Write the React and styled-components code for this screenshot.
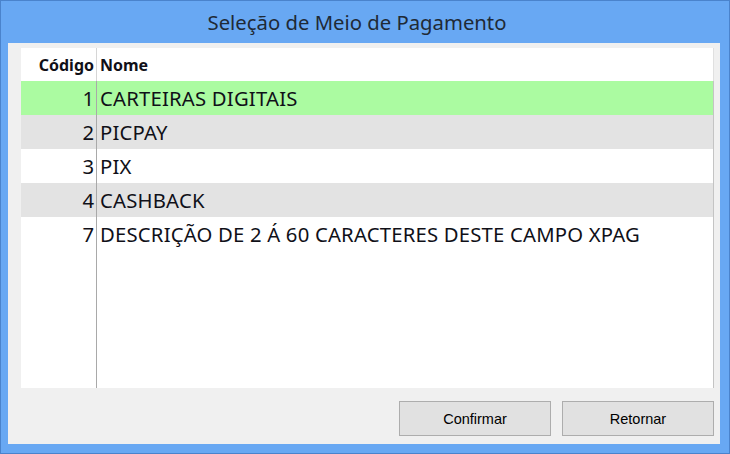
import styled, { createGlobalStyle } from "styled-components";

const GlobalStyle = createGlobalStyle`
    html, body {
        margin: 0;
        padding: 0;
        background: #ffffff;
    }
    * {
        box-sizing: border-box;
    }
`

const Window = styled.div`
    width: 730px;
    height: 454px;
    display: flex;
    flex-direction: column;
    background-color: #68a8f3;
    border: 1px solid #4a83cc;
    padding: 0 9px 9px 7px;
    font-family: "Noto Sans", "Open Sans", sans-serif;
`

const TitleBar = styled.div`
    height: 42px;
    display: flex;
    align-items: center;
    justify-content: center;
    padding-right: 14px;
    font-size: 20.3px;
    color: #1f2a36;
`

const Client = styled.div`
    flex: 1;
    display: flex;
    flex-direction: column;
    background-color: #f0f0f0;
    padding: 5px 6px 7px 13px;
`

const Grid = styled.div`
    height: 340px;
    display: flex;
    flex-direction: column;
    background-color: #ffffff;
`

const Row = styled.div`
    display: flex;
    height: ${props => props.$height || 34}px;
    flex: ${props => props.$fill ? 1 : "none"};
    background-color: ${props => props.$bg || "#ffffff"};
    color: #101018;
`

const CodeCell = styled.div`
    width: 76px;
    display: flex;
    align-items: center;
    justify-content: flex-end;
    padding-right: 2px;
    border-right: 1px solid ${props => props.$light ? "#d6d6d6" : "#a9a9a9"};
    font-size: ${props => props.$head ? "16px" : "20.3px"};
    font-weight: ${props => props.$head ? 700 : 400};
`

const NameCell = styled.div`
    flex: 1;
    display: flex;
    align-items: center;
    padding-left: 3px;
    border-right: 1px solid ${props => props.$light ? "#e0e0e0" : "#c4c4c4"};
    font-size: ${props => props.$head ? "16px" : "20.3px"};
    font-weight: ${props => props.$head ? 700 : 400};
    letter-spacing: ${props => props.$head ? 0 : 0.2}px;
    white-space: nowrap;
`

const ButtonBar = styled.div`
    display: flex;
    justify-content: flex-end;
    gap: 11px;
    margin-top: 13px;
`

const Button = styled.button`
    width: 152px;
    height: 35px;
    background-color: #e1e1e1;
    border: 1px solid #adadad;
    font-family: "Liberation Sans", Arial, sans-serif;
    font-size: 14.5px;
    color: #000000;
    padding: 0;
`

const items = [
    { code: 1, name: "CARTEIRAS DIGITAIS" },
    { code: 2, name: "PICPAY" },
    { code: 3, name: "PIX" },
    { code: 4, name: "CASHBACK" },
    { code: 7, name: "DESCRIÇÃO DE 2 Á 60 CARACTERES DESTE CAMPO XPAG" },
]

const rowColor = (i) => {
    if (i === 0) return "#abfba1"
    return i % 2 === 1 ? "#e3e3e3" : "#ffffff"
}

export default function App() {
    return (
        <>
            <GlobalStyle />
            <Window>
                <TitleBar>Seleção de Meio de Pagamento</TitleBar>
                <Client>
                    <Grid>
                        <Row $height={33}>
                            <CodeCell $head $light>Código</CodeCell>
                            <NameCell $head $light>Nome</NameCell>
                        </Row>
                        {items.map((item, i) => (
                            <Row key={item.code} $bg={rowColor(i)}>
                                <CodeCell>{item.code}</CodeCell>
                                <NameCell>{item.name}</NameCell>
                            </Row>
                        ))}
                        <Row $fill>
                            <CodeCell />
                            <NameCell />
                        </Row>
                    </Grid>
                    <ButtonBar>
                        <Button>Confirmar</Button>
                        <Button>Retornar</Button>
                    </ButtonBar>
                </Client>
            </Window>
        </>
    )
}
